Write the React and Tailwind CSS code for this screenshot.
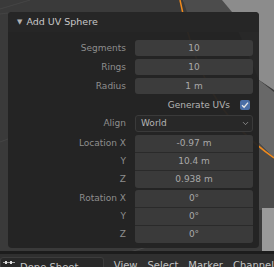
import { ChevronDown } from 'lucide-react';

function Row({ label, value }) {
  return (
    <div className="flex items-center h-4">
      <div className="w-[118px] pr-0 text-right text-[#8e8e8e]">{label}</div>
      <div className="ml-[9px] w-[118px] h-4 rounded-[3px] bg-[#3c3c3c] flex items-center justify-center text-[#a9a9a9]">
        {value}
      </div>
    </div>
  );
}

function Group({ title, values }) {
  const axes = ['X', 'Y', 'Z'];
  return (
    <div className="flex">
      <div className="w-[118px] flex flex-col text-[#8e8e8e]">
        {axes.map((a, i) => (
          <div key={a} className={`h-[17px] flex items-center justify-end ${i > 0 ? 'mt-px' : ''}`}>
            {i === 0 ? `${title} ${a}` : a}
          </div>
        ))}
      </div>
      <div className="ml-[9px] w-[118px] rounded-[3px] overflow-hidden bg-[#2a2a2a] flex flex-col gap-px">
        {values.map((v, i) => (
          <div key={i} className="h-[17px] bg-[#3a3a3a] flex items-center justify-center text-[#a9a9a9]">
            {v}
          </div>
        ))}
      </div>
    </div>
  );
}

export default function App() {
  return (
    <div className="relative w-[274px] h-[267px] overflow-hidden bg-[#3a3a3a] font-['DejaVu_Sans',sans-serif] text-[9px] leading-none">
      {/* viewport drawing */}
      <svg className="absolute inset-0" width="274" height="267" viewBox="0 0 274 267">
        <polygon points="183,0 274,0 274,90 259,80 230,12 190,12" fill="#8c8c8c" />
        <polygon points="183,0 222,0 232,12 187,12" fill="#4c4c4c" />
        <polygon points="259,80 274,92 274,158 259,143" fill="#686868" />
        <polygon points="259,143 274,158 274,210 259,210" fill="#4b4b4b" />
        <polygon points="262,208 274,208 274,252 262,252" fill="#9a9a9a" />
        <line x1="0" y1="9" x2="30" y2="0" stroke="#454545" strokeWidth="1" />
        <line x1="0" y1="14" x2="8" y2="13" stroke="#444" strokeWidth="1" />
        <line x1="0" y1="142" x2="8" y2="139" stroke="#454545" strokeWidth="1" />
        <line x1="130" y1="252" x2="150" y2="246" stroke="#4a4a4a" strokeWidth="1" />
        <path d="M180,0 C198,90 232,128 274,158" fill="none" stroke="#f08a1c" strokeWidth="1.5" />
      </svg>

      <div className="relative flex flex-col h-full">
        <div className="flex-1 pt-3 pl-2">
          {/* operator panel */}
          <div className="w-[251px] h-[236px] rounded-[4px] bg-[#232323]/[0.96] flex flex-col overflow-hidden">
            <div className="h-5 flex items-center pl-[9px] text-[#c8c8c8] bg-[#262626]/[0.96]">
              <span className="text-[7px] text-[#b0b0b0] mr-[4px]">▼</span>
              <span className="text-[9.5px]">Add UV Sphere</span>
            </div>
            <div className="flex flex-col pt-2">
              <Row label="Segments" value="10" />
              <div className="mt-[3px]"><Row label="Rings" value="10" /></div>
              <div className="mt-[3px]"><Row label="Radius" value="1 m" /></div>
              <div className="h-4 mt-[3px] flex items-center justify-end pr-[9px]">
                <span className="text-[#b4b4b4] mr-[10px]">Generate UVs</span>
                <span className="w-[10px] h-[10px] rounded-[2px] bg-[#4a6ea6] flex items-center justify-center">
                  <svg width="8" height="8" viewBox="0 0 8 8">
                    <path d="M1,4.2 L3.1,6.2 L7,1.6" fill="none" stroke="#e6e6e6" strokeWidth="1.3" />
                  </svg>
                </span>
              </div>
              <div className="flex items-center mt-[2px]">
                <div className="w-[118px] text-right text-[#8e8e8e]">Align</div>
                <div className="ml-[9px] w-[118px] h-[17px] rounded-[3px] bg-[#282828] border border-[#3a3a3a] flex items-center justify-between pl-[5px] pr-[2px] text-[#b4b4b4]">
                  <span>World</span>
                  <ChevronDown size={9} strokeWidth={2} className="text-[#a0a0a0]" />
                </div>
              </div>
              <div className="mt-[3px]">
                <Group title="Location" values={['-0.97 m', '10.4 m', '0.938 m']} />
              </div>
              <div className="mt-[2px]">
                <Group title="Rotation" values={['0°', '0°', '0°']} />
              </div>
            </div>
          </div>
        </div>

        {/* bottom editor header */}
        <div className="h-4 border-t-[3px] border-[#1c1c1c] bg-[#2f2f2f] flex items-start pt-[3px] text-[10px] text-[#c4c4c4]">
          <div className="w-[105px] h-5 rounded-[3px] bg-[#282828] border border-[#3c3c3c] flex pl-[2px] pt-[2px]">
            <svg width="12" height="6" viewBox="0 0 12 6" className="mt-[1px]">
              <rect x="0" y="1" width="12" height="1" fill="#aaa" />
              <rect x="2" y="0" width="2" height="3" fill="#ddd" />
              <rect x="7" y="0" width="2" height="3" fill="#ddd" />
            </svg>
            <span className="ml-[5px] pt-[3px]">Dope Sheet</span>
            <ChevronDown size={9} strokeWidth={2} className="ml-auto mr-[4px] mt-[4px] text-[#aaa]" />
          </div>
          <div className="flex gap-[10px] ml-[10px] pt-[4px]">
            <span>View</span>
            <span>Select</span>
            <span>Marker</span>
            <span>Channel</span>
          </div>
        </div>
      </div>
    </div>
  );
}
